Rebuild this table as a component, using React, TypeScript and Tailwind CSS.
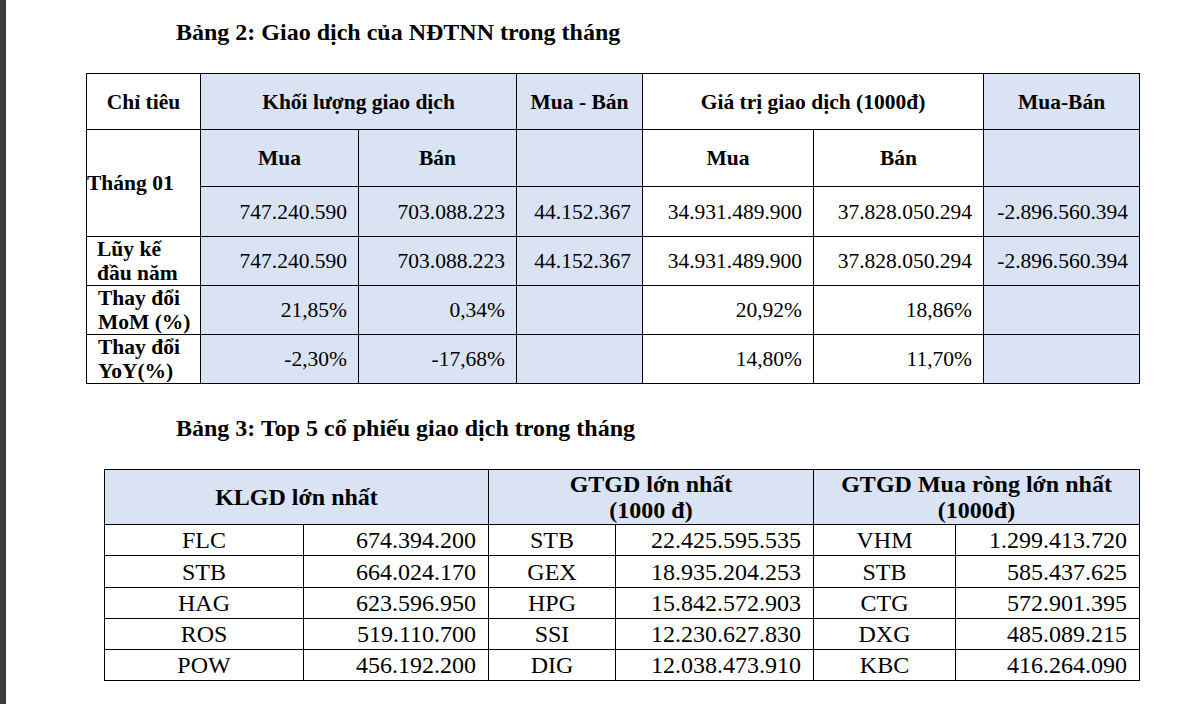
import React from "react";

const BLUE = "bg-[#dae3f3]";

type Cell = {
  t?: React.ReactNode;
  blue?: boolean;
  align?: "l" | "c" | "r";
  bold?: boolean;
  colSpan?: number;
  rowSpan?: number;
  pl?: string;
};

function Td({ c, h }: { c: Cell; h: string }) {
  const align =
    c.align === "l" ? "text-left" : c.align === "r" ? "text-right pr-[11px]" : "text-center";
  return (
    <td
      colSpan={c.colSpan}
      rowSpan={c.rowSpan}
      className={`border border-black p-0 align-middle ${h} ${align} ${c.blue ? BLUE : "bg-white"} ${
        c.bold ? "font-bold" : ""
      } ${c.pl ?? ""}`}
    >
      {c.t}
    </td>
  );
}

const t1Rows: { h: string; cells: Cell[] }[] = [
  {
    h: "h-[56px]",
    cells: [
      { t: "Chỉ tiêu", bold: true },
      { t: "Khối lượng giao dịch", bold: true, blue: true, colSpan: 2 },
      { t: "Mua - Bán", bold: true, blue: true },
      { t: "Giá trị giao dịch (1000đ)", bold: true, colSpan: 2 },
      { t: "Mua-Bán", bold: true, blue: true },
    ],
  },
  {
    h: "h-[57px]",
    cells: [
      { t: "Tháng 01", bold: true, align: "l", rowSpan: 2 },
      { t: "Mua", bold: true, blue: true },
      { t: "Bán", bold: true, blue: true },
      { t: "", blue: true },
      { t: "Mua", bold: true },
      { t: "Bán", bold: true },
      { t: "", blue: true },
    ],
  },
  {
    h: "h-[50px]",
    cells: [
      { t: "747.240.590", blue: true, align: "r" },
      { t: "703.088.223", blue: true, align: "r" },
      { t: "44.152.367", blue: true, align: "r" },
      { t: "34.931.489.900", align: "r" },
      { t: "37.828.050.294", align: "r" },
      { t: "-2.896.560.394", blue: true, align: "r" },
    ],
  },
  {
    h: "h-[49px]",
    cells: [
      {
        t: (
          <span className="block leading-[24px]">
            Lũy kế
            <br />
            đầu năm
          </span>
        ),
        bold: true,
        align: "l",
        pl: "pl-[10px]",
      },
      { t: "747.240.590", blue: true, align: "r" },
      { t: "703.088.223", blue: true, align: "r" },
      { t: "44.152.367", blue: true, align: "r" },
      { t: "34.931.489.900", align: "r" },
      { t: "37.828.050.294", align: "r" },
      { t: "-2.896.560.394", blue: true, align: "r" },
    ],
  },
  {
    h: "h-[49px]",
    cells: [
      {
        t: (
          <span className="block leading-[24px]">
            Thay đổi
            <br />
            MoM (%)
          </span>
        ),
        bold: true,
        align: "l",
        pl: "pl-[11px]",
      },
      { t: "21,85%", blue: true, align: "r" },
      { t: "0,34%", blue: true, align: "r" },
      { t: "", blue: true },
      { t: "20,92%", align: "r" },
      { t: "18,86%", align: "r" },
      { t: "", blue: true },
    ],
  },
  {
    h: "h-[49px]",
    cells: [
      {
        t: (
          <span className="block leading-[24px]">
            Thay đổi
            <br />
            YoY(%)
          </span>
        ),
        bold: true,
        align: "l",
        pl: "pl-[11px]",
      },
      { t: "-2,30%", blue: true, align: "r" },
      { t: "-17,68%", blue: true, align: "r" },
      { t: "", blue: true },
      { t: "14,80%", align: "r" },
      { t: "11,70%", align: "r" },
      { t: "", blue: true },
    ],
  },
];

const t2Data = [
  ["FLC", "674.394.200", "STB", "22.425.595.535", "VHM", "1.299.413.720"],
  ["STB", "664.024.170", "GEX", "18.935.204.253", "STB", "585.437.625"],
  ["HAG", "623.596.950", "HPG", "15.842.572.903", "CTG", "572.901.395"],
  ["ROS", "519.110.700", "SSI", "12.230.627.830", "DXG", "485.089.215"],
  ["POW", "456.192.200", "DIG", "12.038.473.910", "KBC", "416.264.090"],
];
const t2Heights = ["h-[31px]", "h-[32px]", "h-[31px]", "h-[31px]", "h-[31px]"];

export default function App() {
  return (
    <div className="flex w-[1193px] h-[704px] bg-white overflow-hidden font-['Liberation_Serif','Times_New_Roman',serif] text-black">
      <div className="w-[6px] h-full bg-[#3b3d3f] shrink-0" />
      <div className="flex flex-col">
        <div className="mt-[18px] ml-[170px] text-[24px] leading-[28px] font-bold">
          Bảng 2: Giao dịch của NĐTNN trong tháng
        </div>
        <table className="mt-[27px] ml-[80px] border-collapse table-fixed w-[1053px] text-[21.5px] leading-[24px]">
          <colgroup>
            <col className="w-[114px]" />
            <col className="w-[158px]" />
            <col className="w-[158px]" />
            <col className="w-[126px]" />
            <col className="w-[171px]" />
            <col className="w-[170px]" />
            <col className="w-[156px]" />
          </colgroup>
          <tbody>
            {t1Rows.map((r, i) => (
              <tr key={i}>
                {r.cells.map((c, j) => (
                  <Td key={j} c={c} h={r.h} />
                ))}
              </tr>
            ))}
          </tbody>
        </table>
        <div className="mt-[30px] ml-[170px] text-[24px] leading-[28px] font-bold">
          Bảng 3: Top 5 cổ phiếu giao dịch trong tháng
        </div>
        <table className="mt-[27px] ml-[98px] border-collapse table-fixed w-[1035px] text-[24px] leading-[26px]">
          <colgroup>
            <col className="w-[199px]" />
            <col className="w-[185px]" />
            <col className="w-[127px]" />
            <col className="w-[198px]" />
            <col className="w-[142px]" />
            <col className="w-[184px]" />
          </colgroup>
          <tbody>
            <tr>
              <td colSpan={2} className={`border border-black ${BLUE} h-[55px] p-0 text-center align-middle font-bold`}>
                KLGD lớn nhất
              </td>
              <td colSpan={2} className={`border border-black ${BLUE} h-[55px] p-0 text-center align-middle font-bold`}>
                GTGD lớn nhất
                <br />
                (1000 đ)
              </td>
              <td colSpan={2} className={`border border-black ${BLUE} h-[55px] p-0 text-center align-middle font-bold`}>
                GTGD Mua ròng lớn nhất
                <br />
                (1000đ)
              </td>
            </tr>
            {t2Data.map((row, i) => (
              <tr key={i}>
                {row.map((v, j) => (
                  <td
                    key={j}
                    className={`border border-black p-0 align-middle ${t2Heights[i]} ${
                      j % 2 === 0 ? "text-center" : "text-right pr-[12px]"
                    }`}
                  >
                    {v}
                  </td>
                ))}
              </tr>
            ))}
          </tbody>
        </table>
      </div>
    </div>
  );
}
